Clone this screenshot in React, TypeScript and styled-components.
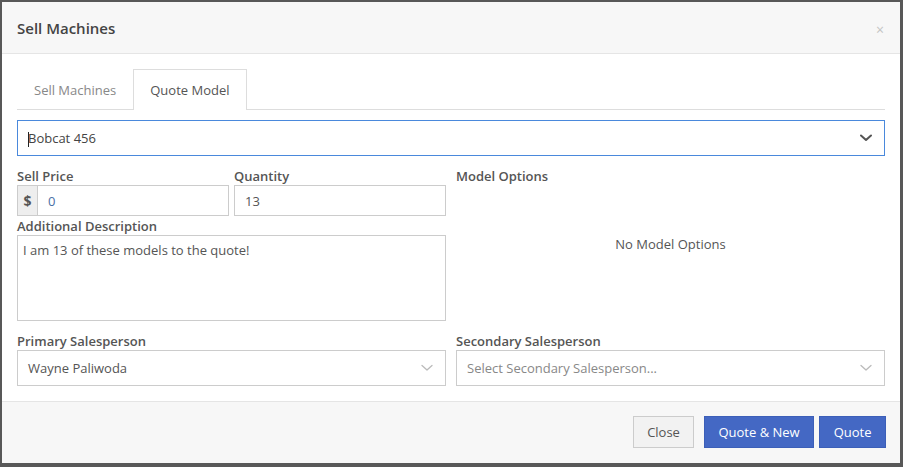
import styled, { createGlobalStyle } from "styled-components";

const GlobalStyle = createGlobalStyle`
  html, body {
    margin: 0;
    padding: 0;
    background: #585858;
  }
  body {
    font-family: "Open Sans", "Liberation Sans", sans-serif;
    font-size: 13px;
    color: #555;
  }
`;

const Backdrop = styled.div`
  padding: 2px 4px 4px 2px;
  height: 467px;
  box-sizing: border-box;
  display: flex;
`;

const Modal = styled.div`
  flex: 1;
  background: #fff;
  display: flex;
  flex-direction: column;
`;

const Header = styled.div`
  height: 51px;
  background: #f7f7f7;
  border-bottom: 1px solid #e5e5e5;
  display: flex;
  align-items: center;
  justify-content: space-between;
  padding: 0 15px;
`;

const Title = styled.h4`
  margin: 0;
  font-size: 15px;
  font-weight: 600;
  color: #444;
  padding-top: 1px;
`;

const CloseX = styled.span`
  color: #c4c4c4;
  font-size: 14px;
  line-height: 1;
  padding-top: 4px;
  margin-right: 1px;
`;

const Body = styled.div`
  flex: 1;
  padding: 15px 15px 0 15px;
`;

const TabBar = styled.div`
  display: flex;
  border-bottom: 1px solid #ddd;
  height: 40px;
`;

const Tab = styled.div<{ $active?: boolean }>`
  padding: 0 16px;
  height: 41px;
  box-sizing: border-box;
  display: flex;
  align-items: center;
  color: ${(p) => (p.$active ? "#555" : "#888")};
  background: ${(p) => (p.$active ? "#fff" : "transparent")};
  border: 1px solid ${(p) => (p.$active ? "#ddd" : "transparent")};
  border-bottom: none;
  margin-bottom: -1px;
`;

const ModelSelect = styled.div`
  margin-top: 10px;
  height: 36px;
  box-sizing: border-box;
  border: 1px solid #4a89dc;
  display: flex;
  align-items: center;
  justify-content: space-between;
  padding: 0 12px 0 10px;
  color: #444;
`;

const Caret = styled.span`
  display: inline-block;
  width: 1px;
  height: 15px;
  background: #222;
  vertical-align: middle;
  margin-right: -1px;
`;

const Grid = styled.div<{ $top: number }>`
  display: grid;
  grid-template-columns: 429px 429px;
  column-gap: 10px;
  margin-top: ${(p) => p.$top}px;
`;

const SubGrid = styled.div`
  display: grid;
  grid-template-columns: 1fr 1fr;
  column-gap: 5px;
`;

const Field = styled.div<{ $span?: boolean }>`
  display: flex;
  flex-direction: column;
  grid-column: ${(p) => (p.$span ? "1 / -1" : "auto")};
  margin-top: ${(p) => (p.$span ? "1px" : "0")};
`;

const Label = styled.label`
  font-weight: 600;
  color: #555;
  line-height: 18px;
`;

const InputGroup = styled.div`
  display: flex;
  height: 31px;
  border: 1px solid #ccc;
  box-sizing: border-box;
`;

const Addon = styled.span`
  width: 19px;
  background: #eee;
  border-right: 1px solid #ccc;
  display: flex;
  align-items: center;
  justify-content: center;
  font-weight: 700;
  color: #555;
  font-size: 14px;
`;

const Input = styled.div<{ $color?: string }>`
  flex: 1;
  display: flex;
  align-items: center;
  padding: 0 10px;
  color: ${(p) => p.$color || "#555"};
`;

const PlainInput = styled(Input)`
  height: 31px;
  box-sizing: border-box;
  border: 1px solid #ccc;
  flex: none;
`;

const TextArea = styled.div`
  height: 86px;
  box-sizing: border-box;
  border: 1px solid #ccc;
  padding: 5px 5px;
  color: #555;
`;

const OptionsEmpty = styled.div`
  flex: 1;
  display: flex;
  align-items: center;
  justify-content: center;
  color: #555;
  padding-bottom: 19px;
`;

const Select = styled.div<{ $placeholder?: boolean }>`
  height: 36px;
  box-sizing: border-box;
  border: 1px solid #ccc;
  display: flex;
  align-items: center;
  justify-content: space-between;
  padding: 0 12px 0 10px;
  color: ${(p) => (p.$placeholder ? "#888" : "#555")};
`;

const Footer = styled.div`
  height: 62px;
  box-sizing: border-box;
  background: #f7f7f7;
  border-top: 1px solid #e5e5e5;
  display: flex;
  align-items: center;
  justify-content: flex-end;
  gap: 5px;
  padding: 0 14px 1px 0;
`;

const Button = styled.button<{ $primary?: boolean }>`
  font-family: inherit;
  font-size: 13px;
  height: 32px;
  padding: 0 ${(p) => (p.$primary ? "13.5px" : "13px")};
  margin-right: ${(p) => (p.$primary ? "0" : "5px")};
  border: 1px solid ${(p) => (p.$primary ? "#3c5fb8" : "#ccc")};
  background: ${(p) => (p.$primary ? "#4468c4" : "#f2f2f2")};
  color: ${(p) => (p.$primary ? "#fff" : "#555")};
  border-radius: 0;
`;

const Chevron = ({ color, weight }: { color: string; weight: number }) => (
  <svg width="12" height="8" viewBox="0 0 12 8" fill="none">
    <path d="M1 1.5L6 6L11 1.5" stroke={color} strokeWidth={weight} strokeLinecap="round" strokeLinejoin="round" />
  </svg>
);

export default function App() {
  return (
    <>
      <GlobalStyle />
      <Backdrop>
        <Modal>
          <Header>
            <Title>Sell Machines</Title>
            <CloseX>×</CloseX>
          </Header>
          <Body>
            <TabBar>
              <Tab>Sell Machines</Tab>
              <Tab $active>Quote Model</Tab>
            </TabBar>
            <ModelSelect>
              <span>
                <Caret />Bobcat 456
              </span>
              <Chevron color="#555" weight={2} />
            </ModelSelect>
            <Grid $top={11}>
              <SubGrid>
                <Field>
                  <Label>Sell Price</Label>
                  <InputGroup>
                    <Addon>$</Addon>
                    <Input $color="#4a6fa5">0</Input>
                  </InputGroup>
                </Field>
                <Field>
                  <Label>Quantity</Label>
                  <PlainInput>13</PlainInput>
                </Field>
                <Field $span>
                  <Label>Additional Description</Label>
                  <TextArea>I am 13 of these models to the quote!</TextArea>
                </Field>
              </SubGrid>
              <Field>
                <Label>Model Options</Label>
                <OptionsEmpty>No Model Options</OptionsEmpty>
              </Field>
            </Grid>
            <Grid $top={11}>
              <Field>
                <Label>Primary Salesperson</Label>
                <Select>
                  Wayne Paliwoda
                  <Chevron color="#bbb" weight={1.3} />
                </Select>
              </Field>
              <Field>
                <Label>Secondary Salesperson</Label>
                <Select $placeholder>
                  Select Secondary Salesperson...
                  <Chevron color="#bbb" weight={1.3} />
                </Select>
              </Field>
            </Grid>
          </Body>
          <Footer>
            <Button>Close</Button>
            <Button $primary>Quote &amp; New</Button>
            <Button $primary>Quote</Button>
          </Footer>
        </Modal>
      </Backdrop>
    </>
  );
}
